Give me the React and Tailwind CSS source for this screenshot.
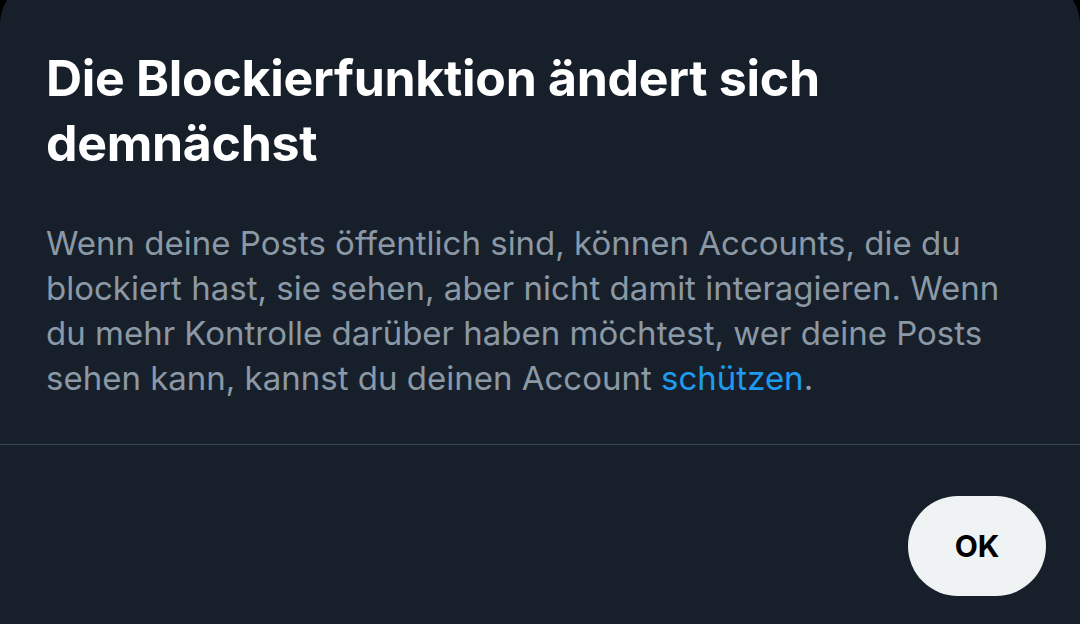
export default function App() {
  return (
    <div className="w-[1080px] h-[624px] bg-black overflow-hidden" style={{ fontFamily: "Inter, 'Noto Sans', sans-serif" }}>
      <div className="-mt-[20px] pt-[20px] h-[644px] bg-[#17202a] rounded-t-[44px] flex flex-col">
        <div className="px-[46px] pt-[46px]">
          <h1 className="text-white font-bold text-[50px] leading-[65px] tracking-[-0.3px] pr-[40px]">
            Die Blockierfunktion ändert sich demnächst
          </h1>
          <p className="mt-[45px] w-[980px] text-[#8b98a5] text-[33px] leading-[45px]">
            Wenn deine Posts öffentlich sind, können Accounts, die du blockiert hast, sie sehen, aber nicht damit interagieren. Wenn du mehr Kontrolle darüber haben möchtest, wer deine Posts sehen kann, kannst du deinen Account <span className="text-[#1d9bf0]">schützen</span>.
          </p>
        </div>
        <div className="mt-[43px] h-px bg-[#38444d]" />
        <div className="flex justify-end pr-[34px] pt-[51px]">
          <button className="w-[138px] h-[100px] rounded-full bg-[#eff3f4] text-black font-bold text-[30px]">
            OK
          </button>
        </div>
      </div>
    </div>
  );
}
